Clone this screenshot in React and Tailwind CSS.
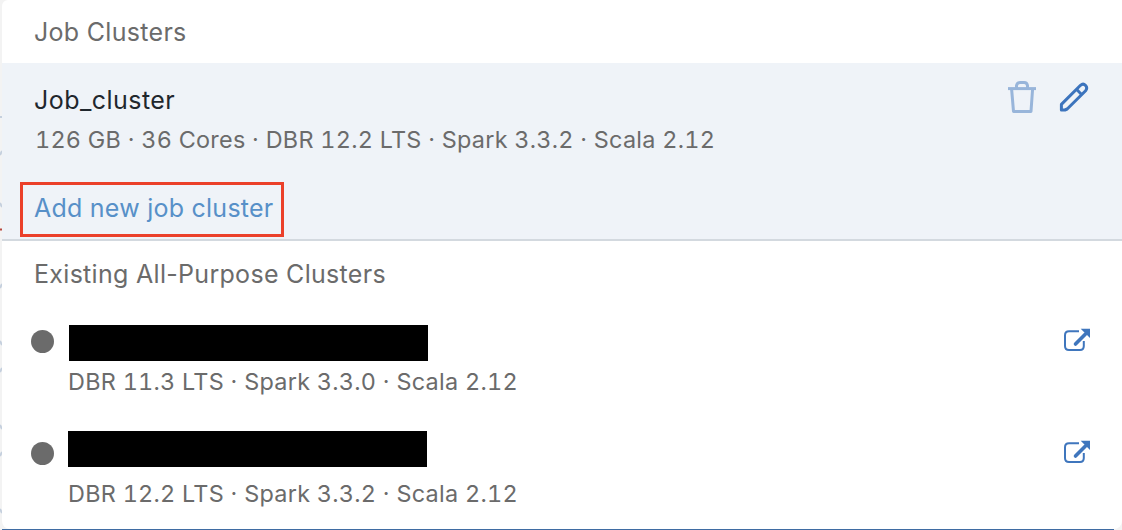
import React from "react";

function TrashIcon() {
  return (
    <svg width="28" height="34" viewBox="0 0 28 34" fill="none" stroke="#98b5da" strokeWidth="3">
      <path d="M0 8.6H28" strokeWidth="3" />
      <path d="M8.5 8V5.5Q9 2.5 12 2.5H16.2Q19 2.5 19.5 5.5V8" />
      <path d="M3.6 9L5.5 31.4H23L24.6 9" strokeLinejoin="round" />
    </svg>
  );
}

function PencilIcon() {
  return (
    <svg width="30" height="30" viewBox="0 0 30 30" fill="none" stroke="#3c74bd" strokeWidth="3" strokeLinejoin="round">
      <path d="M2.4 22.4L21.5 3.3Q24.2 1 26.6 3.5Q28.8 6.1 26.6 8.7L8.2 27L5.9 28H2.4Z" />
      <path d="M17.5 7.3L22.8 12.7" />
    </svg>
  );
}

function OpenIcon() {
  return (
    <svg width="28" height="24" viewBox="0 0 28 24" fill="none" stroke="#3f76bd">
      <path d="M16 3.2H6Q2 3.2 2 7.2V18Q2 22 6 22H17Q20.8 22 20.8 18V13" strokeWidth="2" />
      <path d="M12.5 16L22.5 6" strokeWidth="3.6" strokeLinecap="round" />
      <path d="M17.7 .7H27V10Z" fill="#3f76bd" stroke="none" />
    </svg>
  );
}

function Cluster({ details, nameClass }) {
  return (
    <div className="flex h-[112px] items-start pl-[29px] pr-[31px]">
      <div className="mt-[8px] size-[23px] shrink-0 rounded-full bg-[#6b6b6b]" />
      <div className="flex flex-col items-start pl-[14px]">
        <div className={"h-[44px] " + nameClass}>
          <div className="h-9 w-[359px] bg-black" />
        </div>
        <div className="h-8 whitespace-nowrap text-[23.4px] leading-8 tracking-[0.28px] tabular-nums">{details}</div>
      </div>
      <div className="ml-auto mt-[6px]">
        <OpenIcon />
      </div>
    </div>
  );
}

export default function App() {
  return (
    <div className="flex h-[530px] w-[1122px] overflow-hidden bg-[#f3f3f3] font-['Inter','Liberation_Sans',sans-serif] text-[#6b6b6b]">
      <svg width="2" height="530" viewBox="0 0 2 530" className="shrink-0" fill="none" stroke="#c5d0de" strokeWidth="2">
        <path d="M0 117H2M0 155L2 151M0 203L2 207M0 288L2 284M0 341L2 345M0 372L2 368M0 425L2 429M0 456L2 452M0 509L2 513" />
        <path d="M0 229.5H2" stroke="#b7483e" />
      </svg>
      <div className="flex w-[1120px] flex-col">
        <main className="h-[529px] rounded-tl-[6px] rounded-b-[8px] bg-white">
          <header className="flex h-[63px] items-center pl-[32px] pt-[2px] text-[25px] tracking-[0.3px]">Job Clusters</header>
          <section className="flex h-[178px] flex-col items-start border-b-2 border-[#d3d9df] bg-[#eff3f8]">
            <div className="flex h-[119px] w-full">
              <div className="pl-[32px] pt-[21px]">
                <div className="h-8 text-[25px] leading-8 tracking-[0.45px] text-[#1f272d]">Job_cluster</div>
                <div className="mt-2 h-8 whitespace-nowrap pl-px text-[23.4px] leading-8 tracking-[0.27px] tabular-nums">126 GB · 36 Cores · DBR 12.2 LTS · Spark 3.3.2 · Scala 2.12</div>
              </div>
              <div className="ml-auto mr-[33px] mt-[17px] flex gap-[23px]">
                <TrashIcon />
                <div className="pt-[2px]"><PencilIcon /></div>
              </div>
            </div>
            <button className="ml-[18px] flex h-[55px] w-[264px] items-center border-3 border-[#eb402a] pb-[4px] pl-[11px] text-[25px] leading-8 tracking-[0.24px] whitespace-nowrap text-[#5790c8]">Add new job cluster</button>
          </section>
          <section>
            <h2 className="h-[81px] pl-[32px] pt-[17px] text-[25px] leading-8 tracking-[0.3px]">Existing All-Purpose Clusters</h2>
            <Cluster details="DBR 11.3 LTS · Spark 3.3.0 · Scala 2.12" nameClass="pl-px pt-[3px]" />
            <Cluster details="DBR 12.2 LTS · Spark 3.3.2 · Scala 2.12" nameClass="-mt-[3px] mb-[3px]" />
          </section>
        </main>
        <div className="mr-[8px] h-px bg-[#3f6ca3]" />
      </div>
    </div>
  );
}
